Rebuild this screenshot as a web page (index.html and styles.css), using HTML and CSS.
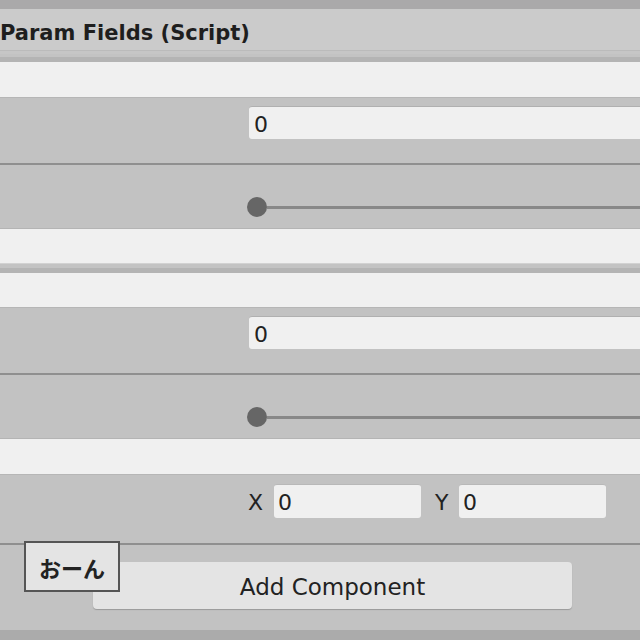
FILE: index.html
```html
<!DOCTYPE html>
<html>
<head>
<meta charset="utf-8">
<link rel="stylesheet" href="styles.css">
</head>
<body>
<div class="inspector">
  <div class="topbar"></div>
  <div class="header"><span class="title">Param Fields (Script)</span></div>

  <div class="band band-first"></div>
  <div class="strip strip-35"></div>
  <div class="row row-field"><div class="field"><span>0</span></div></div>
  <div class="divider"></div>
  <div class="row row-slider"><div class="slider"><div class="knob"></div><div class="track"></div></div></div>
  <div class="strip strip-34"></div>

  <div class="band"></div>
  <div class="strip strip-34"></div>
  <div class="row row-field"><div class="field"><span>0</span></div></div>
  <div class="divider"></div>
  <div class="row row-slider"><div class="slider"><div class="knob"></div><div class="track"></div></div></div>
  <div class="strip strip-35"></div>

  <div class="row row-xy">
    <span class="axis">X</span><div class="small-field"><span>0</span></div>
    <span class="axis axis-y">Y</span><div class="small-field"><span>0</span></div>
  </div>
  <div class="divider"></div>

  <div class="footer">
    <button class="add-btn">Add Component</button>
    <div class="tooltip">おーん</div>
  </div>
  <div class="bottombar"></div>
</div>
</body>
</html>
```

FILE: styles.css
```css
html, body {
  margin: 0;
  padding: 0;
  background: #c2c2c2;
}
.inspector {
  width: 640px;
  height: 640px;
  overflow: hidden;
  position: relative;
  display: flex;
  flex-direction: column;
  font-family: "DejaVu Sans", "Noto Sans CJK JP", sans-serif;
  color: #1d1d1d;
}
.topbar {
  height: 9px;
  background: #aaa9aa;
  flex: none;
}
.header {
  height: 42px;
  background: #cbcbcb;
  border-bottom: 1px solid #bbbbbb;
  display: flex;
  align-items: center;
  padding-top: 6px;
  box-sizing: border-box;
  flex: none;
}
.title {
  font-weight: bold;
  font-size: 21px;
  margin-left: 0;
  color: #1e1e1e;
}
.band {
  height: 10px;
  background: #c3c3c3;
  border-top: 1px solid #d2d2d2;
  box-sizing: border-box;
  border-bottom: 5px solid #b4b4b4;
  flex: none;
}
.band-first {
  height: 11px;
  border-top: 3px solid #c6c6c6;
}
.strip {
  background: #f0f0f0;
  flex: none;
}
.strip-35 { height: 35px; }
.strip-34 { height: 34px; }
.row {
  background: #c2c2c2;
  flex: none;
  box-sizing: border-box;
}
.row-field {
  height: 66px;
  padding: 8px 0 0 249px;
  border-top: 1px solid #b6b6b6;
}
.field {
  height: 33px;
  background: #f0f0f0;
  border-radius: 3px 0 0 3px;
  border-top: 1px solid #b0b0b0;
  box-sizing: border-box;
  display: flex;
  align-items: center;
  padding: 3px 0 0 5px;
  font-size: 22px;
  color: #222;
}
.divider {
  height: 2px;
  background: #8f8f8f;
  flex: none;
}
.row-slider {
  height: 64px;
  padding: 32px 0 0 247px;
  border-bottom: 1px solid #b4b4b4;
}
.slider {
  display: flex;
  align-items: center;
  height: 20px;
}
.knob {
  width: 20px;
  height: 20px;
  border-radius: 50%;
  background: #666666;
  flex: none;
}
.track {
  flex: 1;
  height: 3px;
  background: #888888;
}
.row-xy {
  height: 69px;
  display: flex;
  align-items: flex-start;
  padding: 9px 0 0 248px;
  border-top: 1px solid #b6b6b6;
}
.axis {
  font-size: 22px;
  width: 26px;
  height: 34px;
  line-height: 37px;
  color: #222;
}
.axis-y {
  margin-left: 14px;
  width: 24px;
}
.small-field {
  width: 147px;
  height: 34px;
  background: #f0f0f0;
  border-radius: 3px;
  border-top: 1px solid #b8b8b8;
  box-sizing: border-box;
  display: flex;
  align-items: center;
  padding: 2px 0 0 4px;
  font-size: 22px;
  color: #222;
}
.footer {
  flex: 1;
  background: #c2c2c2;
  position: relative;
  padding: 17px 0 0 93px;
}
.add-btn {
  display: block;
  width: 479px;
  height: 47px;
  background: #e4e4e4;
  border: none;
  border-radius: 4px;
  box-shadow: 0 1px 1px #9a9a9a;
  font-family: "DejaVu Sans", sans-serif;
  font-size: 23px;
  color: #222;
  padding: 3px 0 0 0;
}
.tooltip {
  position: absolute;
  left: 24px;
  top: -4px;
  width: 96px;
  height: 51px;
  box-sizing: border-box;
  border: 2px solid #555555;
  background: #e4e4e4;
  display: flex;
  align-items: center;
  justify-content: center;
  font-family: "Noto Sans CJK JP", sans-serif;
  font-weight: bold;
  font-size: 22px;
  color: #222;
}
.bottombar {
  height: 10px;
  background: #ababab;
  flex: none;
}
```
